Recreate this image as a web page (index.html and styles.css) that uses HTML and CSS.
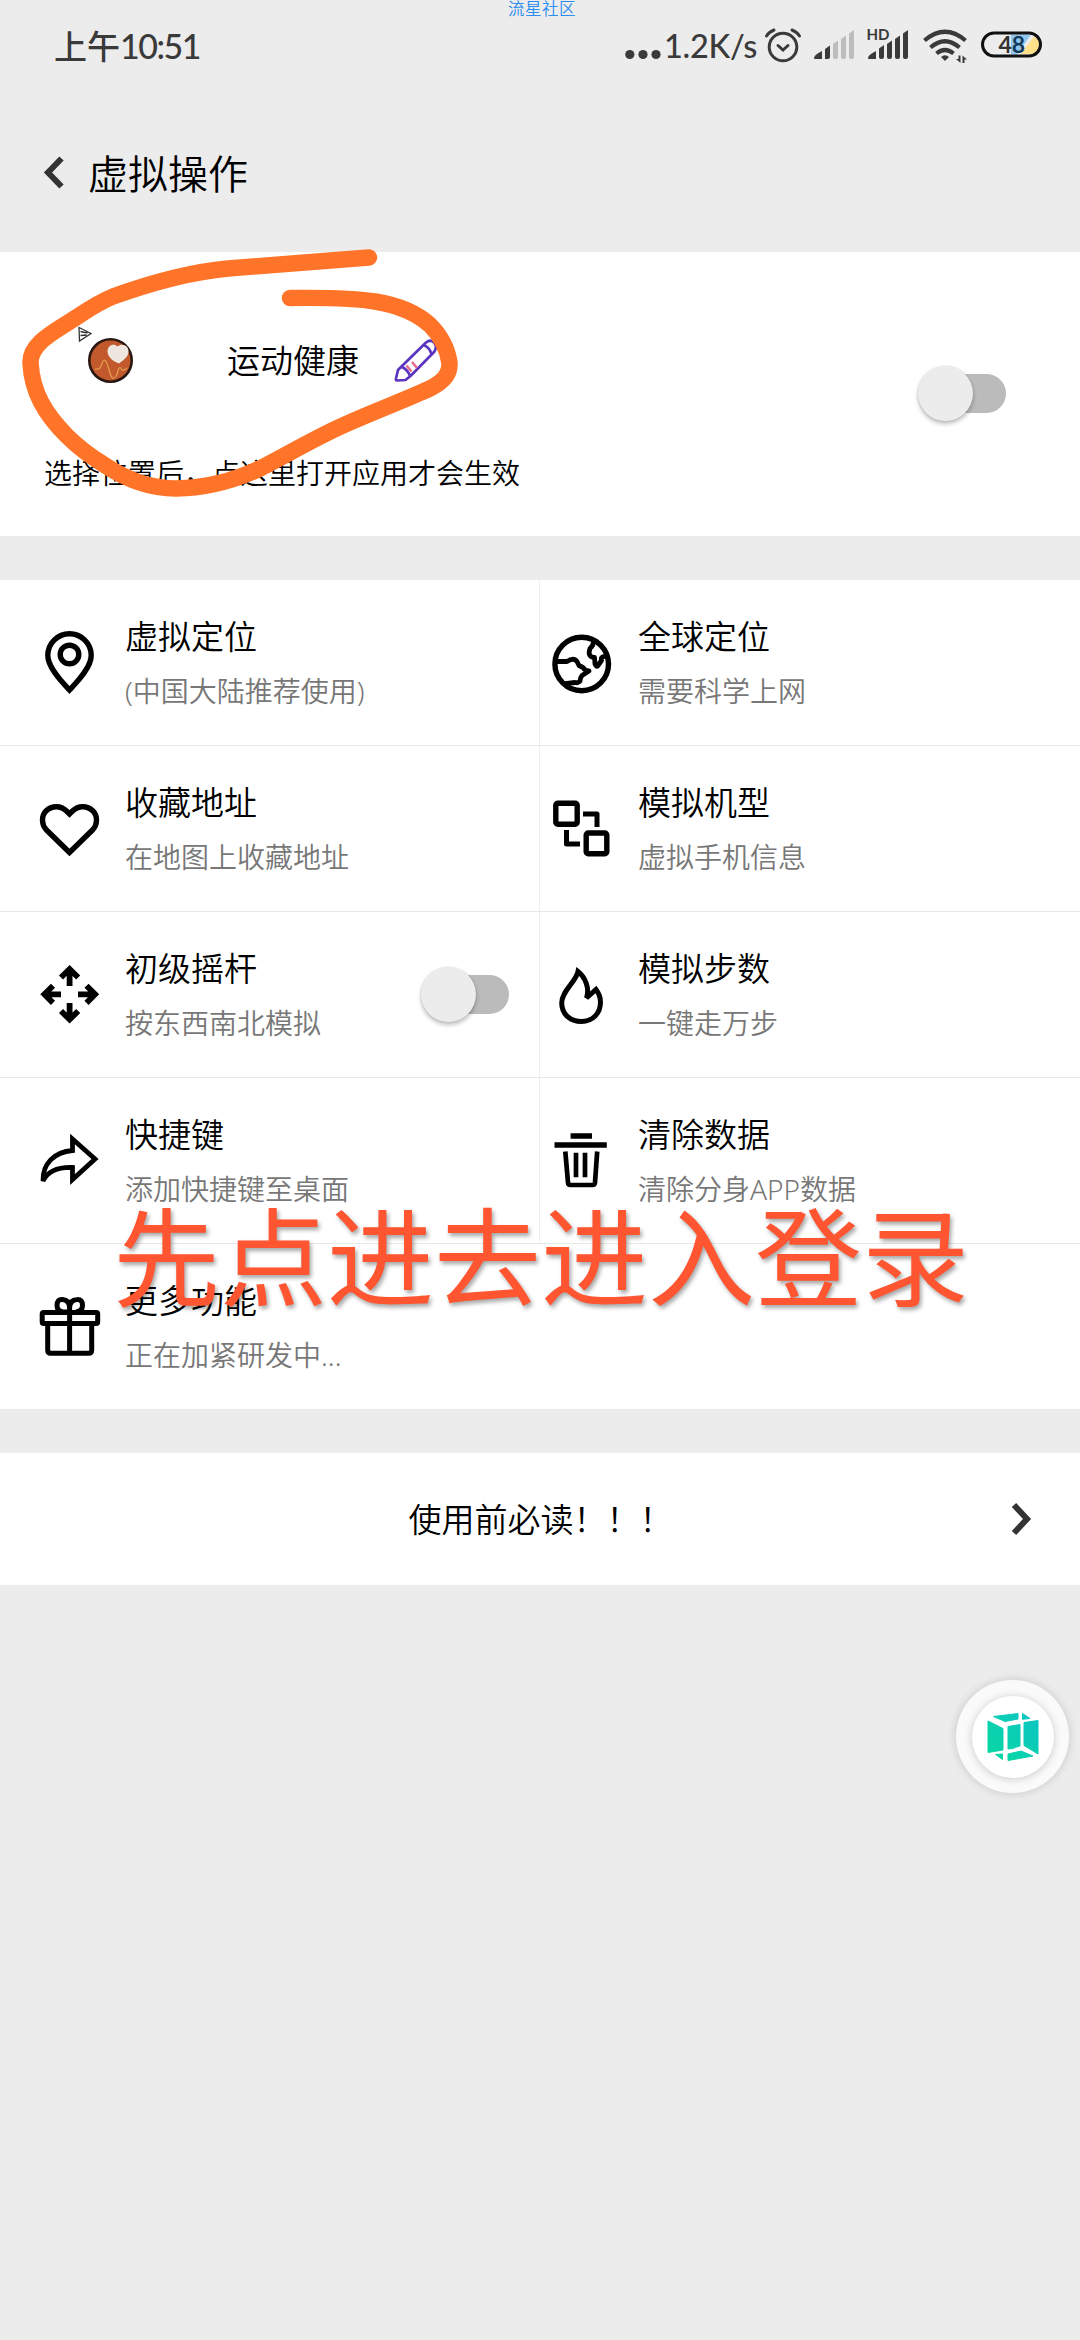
FILE: index.html
```html
<!DOCTYPE html>
<html lang="zh-CN">
<head>
<meta charset="utf-8">
<title>虚拟操作</title>
<link rel="stylesheet" href="styles.css">
</head>
<body>
<div class="screen">
  <div class="watermark">流星社区</div>
  <header class="status">
    <span class="clock"><span class="ampm">上午</span>10:51</span>
    <div class="indicators">
      <svg class="dots" width="36" height="50" viewBox="0 0 36 50"><g fill="#3a3a3a"><circle cx="4.800" cy="33.500" r="4.600"/><circle cx="18" cy="33.500" r="4.600"/><circle cx="31" cy="33.500" r="4.600"/></g></svg>
      <span class="speed">1.2K/s</span>
      <svg class="sys" width="290" height="50" viewBox="0 0 290 50">
        <g fill="none" stroke="#3a3a3a" stroke-width="3" stroke-linecap="round">
          <circle cx="22" cy="26" r="13.800"/>
          <path d="M17 24.500l5 4.500 5-4.500M5.500 15Q8 11 13 9M38.500 15Q36 11 31 9"/>
        </g>
        <path fill="#3a3a3a" d="M53 37q0-3 8-7v8H54q-1 0-1-1zM64 28l5-3.500V36q0 2-2 2h-3z"/>
        <path fill="#bdbdbd" d="M72 23l5-3.500V36q0 2-2 2h-1q-2 0-2-2zM80 18l5-3.500V36q0 2-2 2h-1q-2 0-2-2zM88 12.500l5-3.500V36q0 2-2 2h-1q-2 0-2-2z"/>
        <path fill="#3a3a3a" d="M107 37q0-3 8-7v8h-7q-1 0-1-1zM118 27.500l5-3.500V36q0 2-2 2h-1q-2 0-2-2zM126 23l5-3.500V36q0 2-2 2h-1q-2 0-2-2zM134 18l5-3.500V36q0 2-2 2h-1q-2 0-2-2zM142 12.500l5-3.500V36q0 2-2 2h-1q-2 0-2-2z"/>
        <text x="105.500" y="19" class="hd">HD</text>
        <g fill="none" stroke="#3a3a3a" stroke-width="4.200">
          <path d="M163.500 19.500Q184 2 204.500 19.500M169.500 26.500Q184 14 198.500 26.500M175.500 32.500Q184 25.500 192.500 32.500"/>
        </g>
        <path fill="#3a3a3a" d="M180 36q4-3.500 8 0l-4 4zM199.500 34.500v7.500l-4.500-4h2.500v-3.500zM201.500 42v-7.500l4.500 4h-2.500v3.500z"/>
        <path fill="#8fc6ee" d="M250 13.500h20l-14 20h-6z"/>
        <path fill="#ffe08a" d="M273 15.500q5 2 5 8.500 0 8-8 9h-10z"/>
        <rect x="221.500" y="12" width="58" height="23" rx="11.500" fill="none" stroke="#111" stroke-width="3"/>
        <text x="237.500" y="31.800" class="batt">4<tspan fill="#143a5c">8</tspan></text>
      </svg>
    </div>
  </header>
  <header class="nav">
    <svg width="22" height="36" viewBox="0 0 22 36"><path d="M18.500 3.500L5 17.500l13.500 14" fill="none" stroke="#333" stroke-width="6"/></svg>
    <h1>虚拟操作</h1>
  </header>

  <section class="card">
    <div class="card-main">
      <div class="app">
        <svg class="logo" width="183" height="60" viewBox="44 331 183 60">
          <path d="M79 327.500l12 6-11.500 7.500zM80.500 331.500l7 1.500M80.500 335.500l6-.5" fill="none" stroke="#333" stroke-width="1.300"/>
          <circle cx="110.500" cy="360.500" r="21.200" fill="#c1592c" stroke="#2a1712" stroke-width="2.600"/>
          <path d="M95 369q5 1 6.500-4 3-11 7 3 2 8 4 10 4 1 6-9 2-3 3.500 1 2 1 5-2" fill="none" stroke="#e39a4e" stroke-width="1.300"/>
          <path d="M119 363.500c-6-2-11.500-7-11.500-12 0-6 6-9 10-5 5-4 11.500-.5 11 5.500-.4 5-5 8-9.500 11.500z" fill="#efe6e0"/>
        </svg>
        <span class="name">运动健康</span>
        <svg class="pencil" width="46" height="48" viewBox="392 336 46 48">
          <path d="M402 365l24-23.500q4.500-3.500 8 0t.5 9L410.500 375l-5 4-8.500.5q-1.500 0-1-2l2-8.500zM423.500 344q6 2 8 9M402 366q6 3 8 9" fill="none" stroke="#5a36c0" stroke-width="2.700" stroke-linejoin="round"/>
          <path d="M406.500 364.500l5 6M412 361l5 6" stroke="#e46a8a" stroke-width="2.500"/>
        </svg>
      </div>
      <p class="desc">选择位置后，点这里打开应用才会生效</p>
    </div>
    <div class="switch"></div>
  </section>

  <main class="grid">
    <div class="cell">
      <svg class="ico" viewBox="0 0 66 66"><path d="M33.500 60C27 53 11.800 38 11.800 25.500a21.700 21.700 0 0 1 43.400 0C55.200 38 40 53 33.500 60z"/><circle cx="33.500" cy="24.500" r="9.300"/></svg>
      <div class="txt"><h2>虚拟定位</h2><p>(中国大陆推荐使用)</p></div>
    </div>
    <div class="cell right">
      <svg class="ico" viewBox="0 0 66 66"><circle cx="32.700" cy="34" r="26.800"/><path d="M7 31.500L18 31.500Q24.500 27 28 31.500L30 35.500 34 37.500Q36 41 40 41L33 45.500Q31 48 31 51 29.500 53.500 26 52.500L14 54M44.500 10.500Q45 15 41 18.500 38 27 45.500 27.500L46 34Q48 38.500 50 34L52.500 30.500Q51 25.500 59 26.500" stroke-width="4.800" stroke-linejoin="round"/></svg>
      <div class="txt"><h2>全球定位</h2><p>需要科学上网</p></div>
    </div>
    <div class="cell">
      <svg class="ico" viewBox="0 0 66 66"><path d="M33.500 56.500L10.500 34C5.500 29 5 20 10 15 16 9 25 9.500 30.500 15L33.500 18 36.500 15C42 9.500 51 9 57 15 62 20 61.500 29 56.500 34z"/></svg>
      <div class="txt"><h2>收藏地址</h2><p>在地图上收藏地址</p></div>
    </div>
    <div class="cell right">
      <svg class="ico" viewBox="0 0 66 66"><rect x="6.800" y="7.300" width="21.400" height="21" rx="2"/><rect x="37.200" y="37" width="20.600" height="20.800" rx="2"/><path d="M34 18h14v13M17.500 34v14H31" stroke-width="5" stroke-linejoin="round"/></svg>
      <div class="txt"><h2>模拟机型</h2><p>虚拟手机信息</p></div>
    </div>
    <div class="cell">
      <svg class="ico" viewBox="0 0 66 66"><path d="M33.600 24V7M25 15.500l8.600-8.500 8.600 8.500M33.600 41v17M25 49l8.600 8.500L42.200 49M25 32.300H8M17 23.700l-8.600 8.600 8.600 8.600M42 32.300h17M50.500 23.700l8.600 8.600-8.600 8.600" stroke-width="5.800"/></svg>
      <div class="txt"><h2>初级摇杆</h2><p>按东西南北模拟</p></div>
      <div class="switch"></div>
    </div>
    <div class="cell right">
      <svg class="ico" viewBox="0 0 66 66"><path d="M29 9.500C27 20 12.700 29 12.700 41c0 11 8.300 18.500 19.800 18.500S51.500 51 51.500 40c0-5-1.500-8.500-4.500-12.500L37.500 36C41 26 36 15 29 9.500z" stroke-width="5"/></svg>
      <div class="txt"><h2>模拟步数</h2><p>一键走万步</p></div>
    </div>
    <div class="cell">
      <svg class="ico" viewBox="0 0 66 66"><path d="M36.500 11l22.500 20-22.500 20.500V39.500C22 39 12 43 7 53 6.500 36 18 24 36.500 22.500z" stroke-width="4.800"/></svg>
      <div class="txt"><h2>快捷键</h2><p>添加快捷键至桌面</p></div>
    </div>
    <div class="cell right">
      <svg class="ico" viewBox="0 0 66 66"><path d="M21.600 8H43M5.500 17h52.300" stroke-width="5.600"/><path d="M16.300 23.500l2.700 31q.2 2.500 2.500 2.500h22q2.200 0 2.500-2.500l2.200-31M27 24.700v24.600M36 24.700v24.600" stroke-width="4.700"/></svg>
      <div class="txt"><h2>清除数据</h2><p>清除分身APP数据</p></div>
    </div>
    <div class="cell wide">
      <svg class="ico" viewBox="0 0 66 66"><path d="M6.200 20q0-1.500 1.500-1.500h52.500q1.500 0 1.500 1.500v8q0 1.500-1.500 1.500H7.700q-1.500 0-1.500-1.500zM11.700 30v26q0 3.300 3 3.300h38q3 0 3-3.300V30M33.600 12v47M33.600 18H27Q21 17 21 11.500 21 5 26.500 5.500 33.600 6 33.600 14 33.600 6 41 5.500 46.500 5 46.500 11.500 46.500 17 40 18" stroke-width="5"/></svg>
      <div class="txt"><h2>更多功能</h2><p>正在加紧研发中...</p></div>
    </div>
  </main>

  <section class="notice">
    <span>使用前必读！！！</span>
    <svg width="22" height="36" viewBox="0 0 22 36"><path d="M4 4l13 14L4 32" fill="none" stroke="#333" stroke-width="6"/></svg>
  </section>

  <div class="float">
    <div class="float-inner">
      <svg width="52" height="50" viewBox="0 0 52 50">
        <defs><linearGradient id="teal" x1="0" y1="1" x2="1" y2="0"><stop offset="0" stop-color="#08d9a0"/><stop offset="1" stop-color="#0cc4c4"/></linearGradient></defs>
        <g fill="url(#teal)" stroke="url(#teal)" stroke-width="1" stroke-linejoin="round"><path d="M6.500 4.500L31 1.500V7L18 9.500zM35.500 1.500L43 6.500l-7.500.8zM1 9l15 7.500V38L1 40.500zM21 14.500l12-2V34l-5 1.500-2 1-5 .5zM37 10.500l14-2V42L37 33.500zM21 42l13-3 12 5-25 4.500zM8.500 42.500l7-.5v5.500z"/></g>
      </svg>
    </div>
  </div>
  <svg class="scribble" width="480" height="270" viewBox="0 240 480 270"><path d="M369 257.500L228 268.500C190 272 145 285 113 296.500C95 304 85 312 69 322C50 334 30 345 30.500 363C32 392 45 414 67 436C78 447 90 456 103 464C125 479 148 488.500 176 488.500C208 488 236 480 262 467.500C290 453 315 438 344 425C380 409 405 400 431 388C444 381 450 374 449.500 363C447 345 439 334 430 325C402 300 362 297 290 298" fill="none" stroke="#ff7428" stroke-width="16.500" stroke-linecap="round" stroke-linejoin="round"/></svg>
  <div class="caption">先点进去进入登录</div>
</div>
</body>
</html>
```
FILE: styles.css
```css
* { box-sizing: border-box; }
body { margin: 0; background: #ececec; font-family: "Noto Sans CJK SC", sans-serif; color: #000; }
h1, h2, p { margin: 0; font-weight: 350; }
svg { display: block; flex: none; overflow: visible; }
.screen { position: relative; width: 1080px; height: 2340px; overflow: hidden; background: #ececec; }
.watermark { position: absolute; left: 508px; top: 0; font-size: 16.5px; line-height: 17px; letter-spacing: .5px; font-weight: 350; color: #2b8df0; white-space: nowrap; }
.status { display: flex; justify-content: space-between; height: 92px; padding: 21px 0 0 54px; color: #3a3a3a; }
.clock { font-family: Lato, "Noto Sans CJK SC", sans-serif; font-size: 34px; line-height: 50px; font-weight: 500; letter-spacing: -1.5px; white-space: nowrap; }
.ampm { font-size: 33px; letter-spacing: 0; }
.indicators { display: flex; width: 455px; }
.speed { width: 96px; padding-left: 3px; font-family: Lato, sans-serif; font-size: 32.5px; line-height: 49px; font-weight: 500; letter-spacing: -.3px; white-space: nowrap; }
.sys { margin-left: 4px; }
.hd { font: 700 15px Lato, sans-serif; fill: #3a3a3a; }
.batt { font: 700 23px Lato, sans-serif; fill: #333; }
.nav { display: flex; align-items: center; height: 160px; padding: 2px 0 0 43px; gap: 23px; }
.nav h1 { margin-top: -2px; font-size: 40px; line-height: 56px; }

.card { display: flex; align-items: center; height: 284px; margin-bottom: 44px; background: #fff; }
.card-main { align-self: flex-start; width: 874px; margin: 79px 44px 0 0; padding-left: 44px; }
.card > .switch { margin-top: -2px; }
.app { display: flex; align-items: center; height: 60px; }
.name { width: 165px; margin-top: -4px; font-size: 33px; line-height: 48px; font-weight: 350; white-space: nowrap; }
.desc { margin-top: 61px; font-size: 28px; line-height: 40px; white-space: nowrap; }

.switch { position: relative; flex: none; width: 88px; height: 55px; }
.switch::before { content: ""; position: absolute; left: 10px; right: 0; top: 8px; height: 39px; border-radius: 20px; background: #bbb; }
.switch::after { content: ""; position: absolute; left: 0; top: 0; width: 55px; height: 55px; border-radius: 50%; background: #ececec; box-shadow: 0 3px 4px rgba(0,0,0,.25), 0 0 2px rgba(0,0,0,.12); }

.grid { display: grid; grid-template-columns: 540px 540px; grid-auto-rows: 166px; background: #fff; }
.cell { display: flex; align-items: center; padding-left: 36px; gap: 23px; border-bottom: 1px solid #e8e8e8; border-right: 1px solid #efefef; }
.cell.right { padding-left: 9px; border-right: 0; }
.cell.wide { grid-column: 1 / 3; border-right: 0; }
.ico { width: 66px; height: 66px; fill: none; stroke: #000; stroke-width: 5.4; }
.txt { display: flex; flex-direction: column; gap: 7px; white-space: nowrap; }
.txt h2 { font-size: 33px; line-height: 48px; }
.txt p { margin: 1px 0 -1px; font-family: "Noto Sans", "Noto Sans CJK SC", sans-serif; font-size: 28px; line-height: 48px; color: #777; }
.cell .switch { margin: 0 30px 0 auto; }

.notice { display: flex; align-items: center; justify-content: flex-end; height: 132px; margin-top: 43px; padding-right: 48px; background: #fff; }
.notice span { flex: 1; margin-top: -2px; padding-left: 71px; text-align: center; font-size: 33px; font-weight: 350; }

.float { position: absolute; left: 956px; top: 1680px; width: 113px; height: 113px; border-radius: 50%; background: #fafafa; box-shadow: 0 0 10px rgba(0,0,0,.16); display: flex; align-items: center; justify-content: center; }
.float-inner { display: flex; align-items: center; justify-content: center; width: 82px; height: 82px; border-radius: 50%; background: #fff; box-shadow: 0 1px 9px rgba(0,0,0,.2); }
.scribble { position: absolute; left: 0; top: 240px; }
.caption { position: absolute; left: 113px; top: 1174px; font-size: 107px; line-height: 156px; font-weight: 400; color: #ff5530; text-shadow: 2px 3px 4px rgba(0,0,0,.35); white-space: nowrap; }
```
